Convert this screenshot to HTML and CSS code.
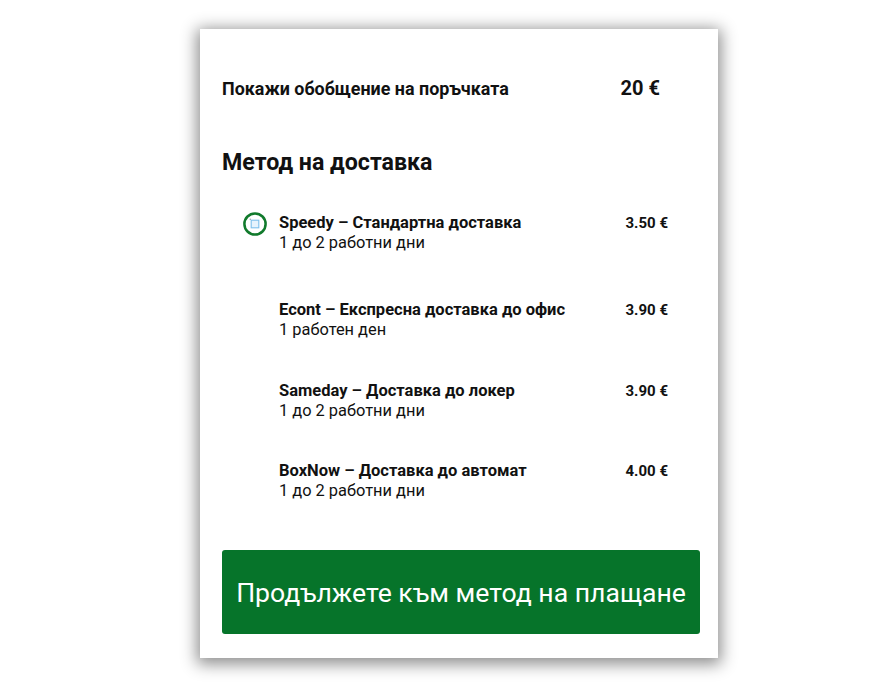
FILE: index.html
```html
<!DOCTYPE html>
<html lang="bg">
<head>
<meta charset="utf-8">
<link rel="stylesheet" href="styles.css">
</head>
<body>
<div class="card">
  <div class="summary">
    <span class="summary-label">Покажи обобщение на поръчката</span>
    <span class="summary-total">20 €</span>
  </div>
  <h2 class="heading">Метод на доставка</h2>
  <div class="methods">
    <div class="method method-selected">
      <span class="radio">
        <svg width="24" height="24" viewBox="0 0 24 24">
          <circle cx="12" cy="12" r="10.6" fill="none" stroke="#117a2c" stroke-width="2.5"/>
          <rect x="8.2" y="8.2" width="7.6" height="7.6" fill="#e6f3fd" stroke="#7fc0ec" stroke-width="1.1"/>
          <circle cx="7.3" cy="7.3" r="0.8" fill="#9aa3ad"/>
        </svg>
      </span>
      <div class="method-text">
        <div class="method-title">Speedy – Стандартна доставка</div>
        <div class="method-sub">1 до 2 работни дни</div>
      </div>
      <span class="method-price">3.50 €</span>
    </div>
    <div class="method">
      <span class="radio"></span>
      <div class="method-text">
        <div class="method-title">Econt – Експресна доставка до офис</div>
        <div class="method-sub">1 работен ден</div>
      </div>
      <span class="method-price">3.90 €</span>
    </div>
    <div class="method">
      <span class="radio"></span>
      <div class="method-text">
        <div class="method-title">Sameday – Доставка до локер</div>
        <div class="method-sub">1 до 2 работни дни</div>
      </div>
      <span class="method-price">3.90 €</span>
    </div>
    <div class="method">
      <span class="radio"></span>
      <div class="method-text">
        <div class="method-title">BoxNow – Доставка до автомат</div>
        <div class="method-sub">1 до 2 работни дни</div>
      </div>
      <span class="method-price">4.00 €</span>
    </div>
  </div>
  <button class="continue">Продължете към метод на плащане</button>
</div>
</body>
</html>
```
FILE: styles.css
```css
html, body {
  margin: 0;
  padding: 0;
  background: #ffffff;
}
body {
  font-family: Roboto, "Noto Sans", "Liberation Sans", sans-serif;
  color: #111111;
  min-height: 688px;
  padding: 29px 0 1px 0;
  box-sizing: border-box;
}
.card {
  box-sizing: border-box;
  width: 518px;
  height: 629px;
  margin: 0 0 0 200px;
  background: #ffffff;
  box-shadow: 0 3px 15px 3px rgba(0, 0, 0, 0.45);
  padding: 47px 18px 24px 22px;
  display: flex;
  flex-direction: column;
}
.summary {
  display: flex;
  justify-content: space-between;
  align-items: center;
  height: 24px;
  padding-right: 40px;
}
.summary-label {
  font-size: 17.9px;
  font-weight: 700;
}
.summary-total {
  font-size: 20px;
  font-weight: 700;
}
.heading {
  margin: 48px 0 0 0;
  font-size: 23.2px;
  font-weight: 700;
  line-height: 28px;
}
.methods {
  display: flex;
  flex-direction: column;
  gap: 39.5px;
  margin: 36px 32px 0 21px;
}
.method {
  display: grid;
  grid-template-columns: 24px 1fr auto;
  column-gap: 12px;
  align-items: start;
}
.method-selected {
  margin-bottom: 6.5px;
}
.radio {
  width: 24px;
  height: 24px;
  display: block;
}
.radio svg {
  display: block;
}
.method-text {
  padding-top: 1px;
}
.method-title {
  font-size: 16.5px;
  font-weight: 700;
  line-height: 20px;
}
.method-sub {
  font-size: 16.4px;
  font-weight: 400;
  line-height: 20px;
}
.method-price {
  font-size: 15px;
  font-weight: 700;
  line-height: 20px;
  padding-top: 1px;
}
.continue {
  margin-top: auto;
  height: 84px;
  width: 100%;
  border: none;
  border-radius: 3px;
  background: #06742a;
  color: #ffffff;
  font-family: Roboto, "Noto Sans", "Liberation Sans", sans-serif;
  font-size: 26.6px;
  font-weight: 400;
  cursor: pointer;
}
```
